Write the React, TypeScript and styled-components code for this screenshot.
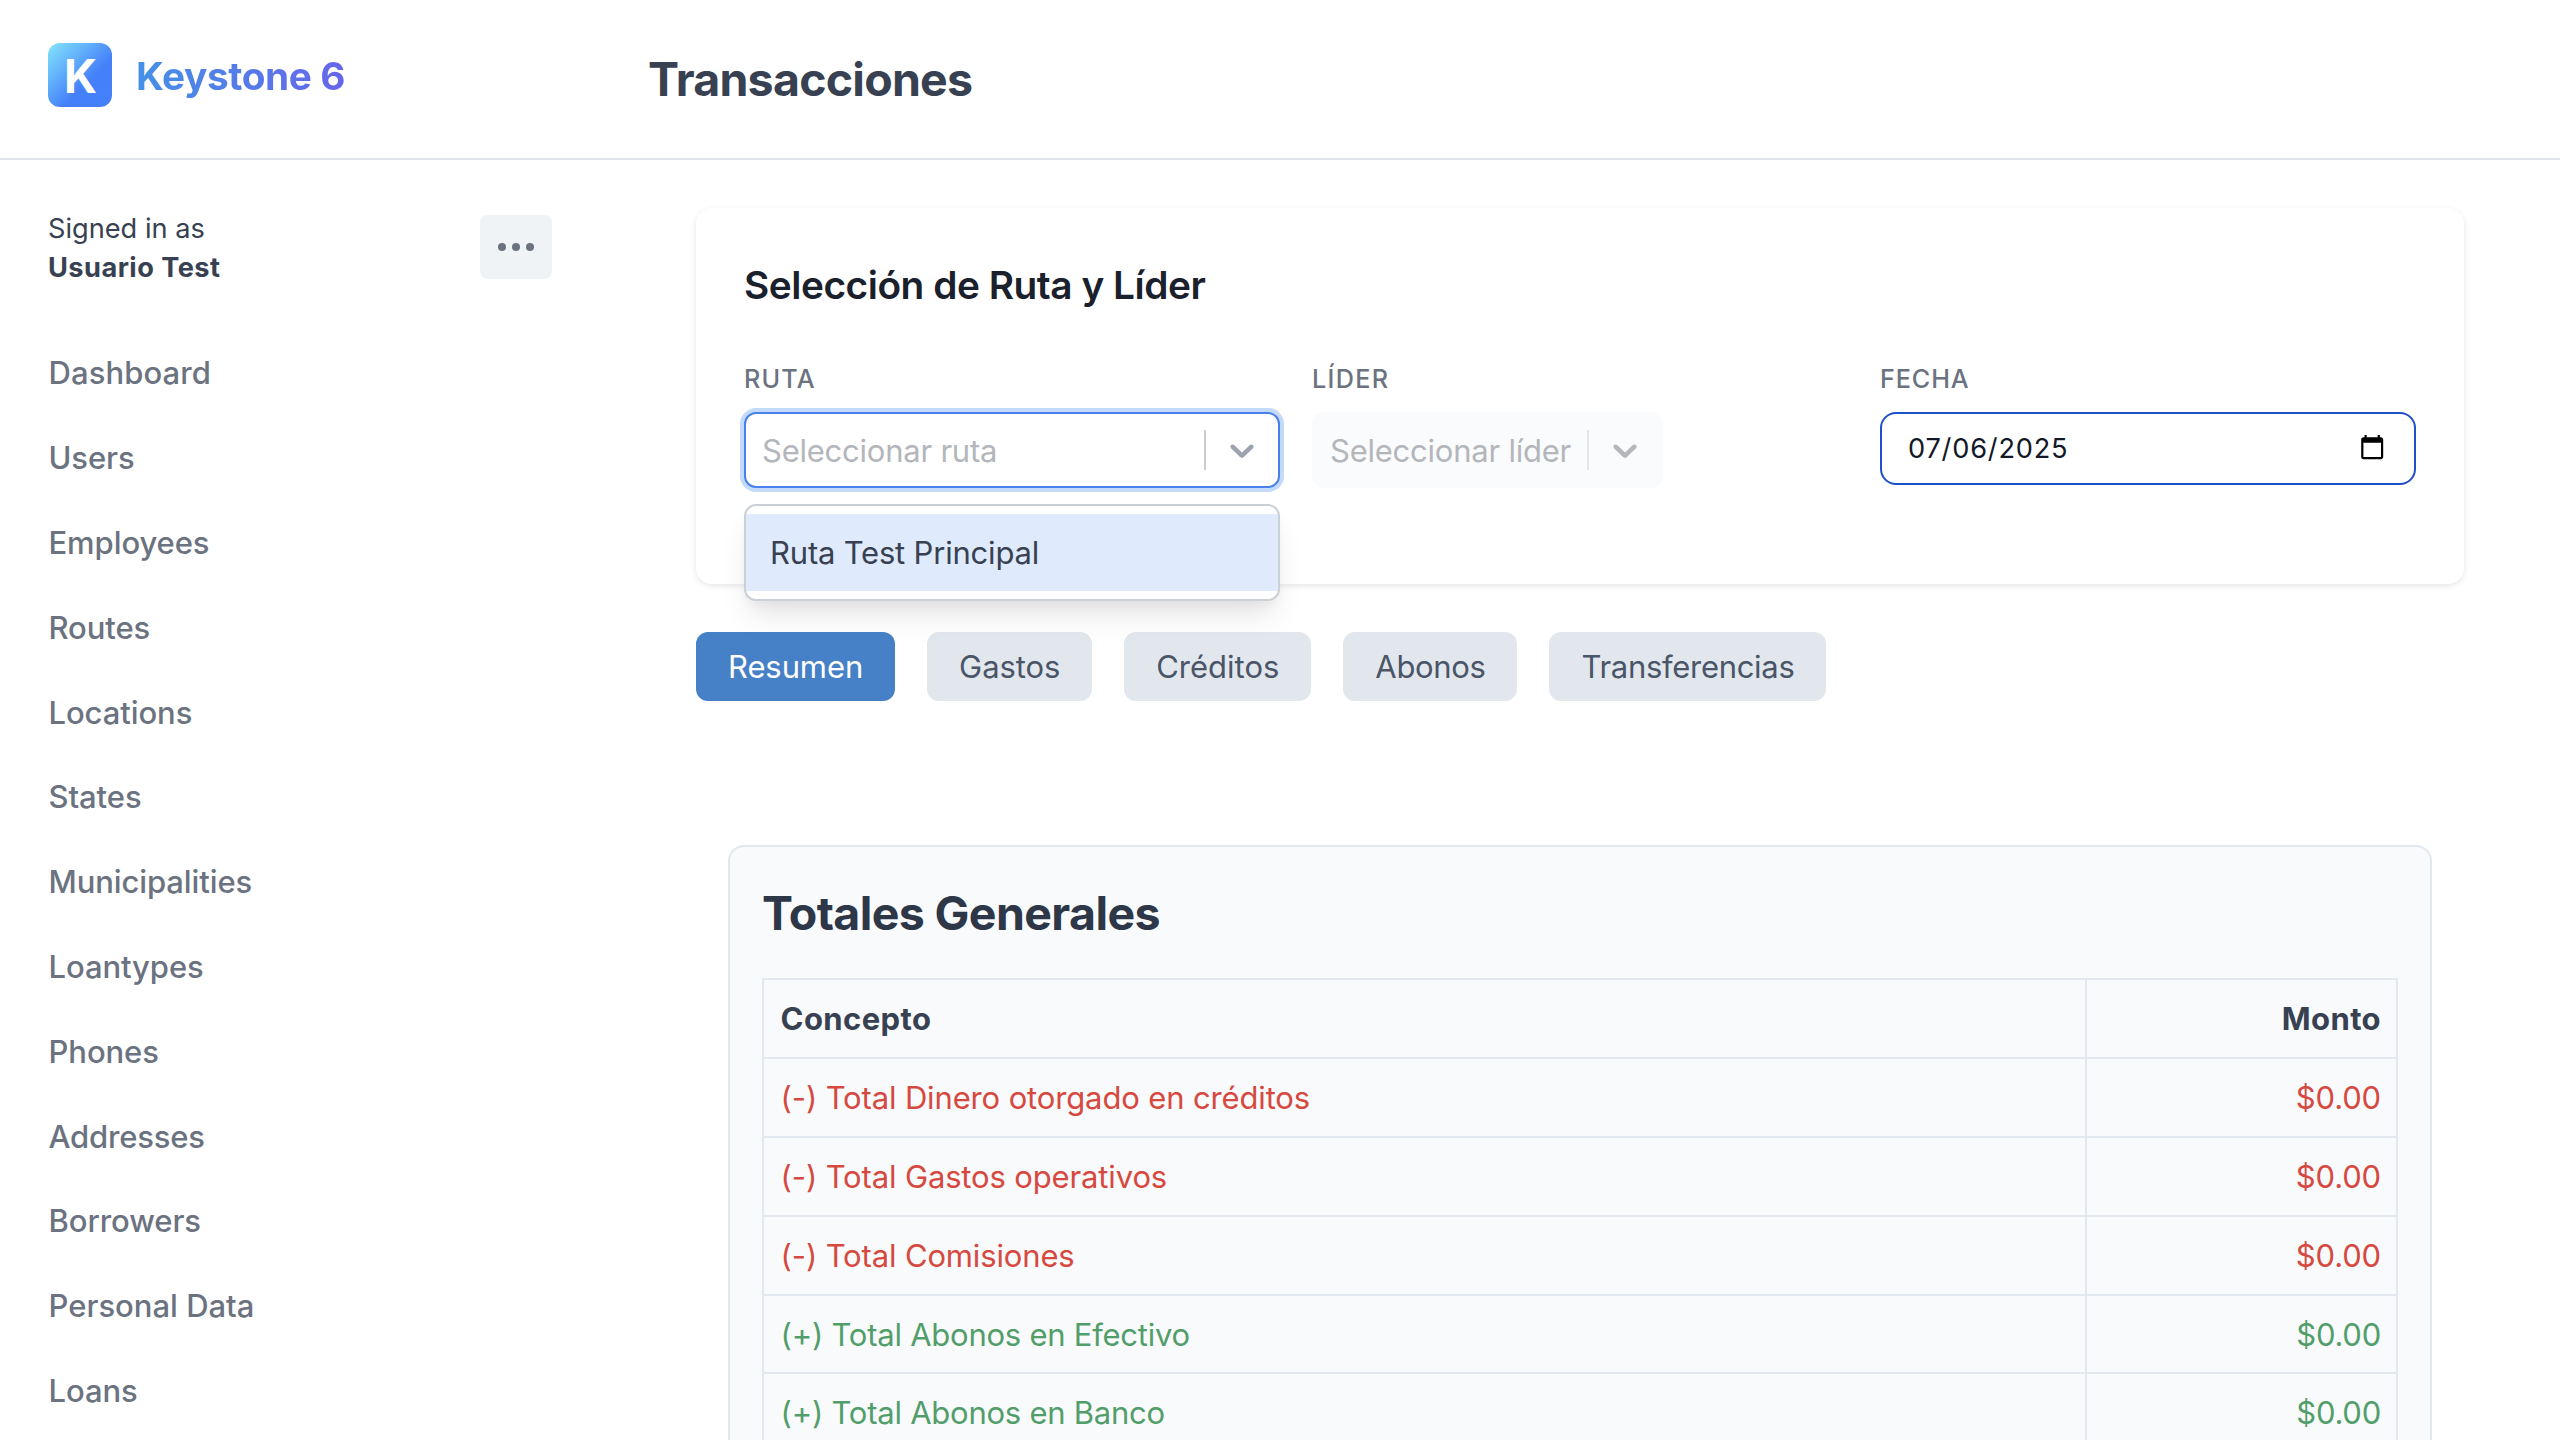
import React from "react";
import styled, { createGlobalStyle } from "styled-components";

const GlobalStyle = createGlobalStyle`
  *, *::before, *::after { box-sizing: border-box; }
  html, body { margin: 0; padding: 0; }
  body {
    background: #fff;
    color: #374151;
    font-family: Inter, "Liberation Sans", sans-serif;
    overflow: hidden;
  }
`;

const Page = styled.div`
  display: flex;
  flex-direction: column;
  width: 2560px;
  height: 1440px;
  overflow: hidden;
`;

const Header = styled.header`
  display: grid;
  grid-template-columns: 600px 1fr;
  align-items: center;
  flex: none;
  height: 160px;
  padding: 0 48px;
  border-bottom: 2px solid #e1e5e9;
`;

const Brand = styled.div`
  display: flex;
  align-items: center;
  gap: 24px;
  margin-bottom: 8px;
`;

const Logo = styled.div`
  display: grid;
  place-items: center;
  width: 64px;
  height: 64px;
  padding: 2px 0 0 1px;
  border-radius: 12px;
  background: linear-gradient(135deg, #84e6fb 0%, #4480f9 62%);
  color: #fff;
  font-size: 46px;
  font-weight: 700;
  line-height: 60px;
`;

const BrandName = styled.span`
  padding-top: 1px;
  background: linear-gradient(to right, #4491e6, #6666ea);
  background-clip: text;
  -webkit-background-clip: text;
  color: transparent;
  font-size: 38.8px;
  font-weight: 700;
  line-height: 64px;
  letter-spacing: -0.4px;
`;

const PageTitle = styled.h1`
  margin: 0;
  color: #374151;
  font-size: 46.5px;
  font-weight: 700;
  line-height: 60px;
  letter-spacing: -0.76px;
`;

const Body = styled.div`
  display: flex;
  flex: 1;
  min-height: 0;
`;

const Sidebar = styled.aside`
  display: flex;
  flex-direction: column;
  flex: none;
  width: 600px;
  padding: 48px 48px 0;
`;

const Session = styled.div`
  display: flex;
  align-items: center;
  justify-content: space-between;
  height: 78.4px;
`;

const SessionText = styled.div`
  padding-top: 2px;
  color: #374151;
  font-size: 27.2px;
  line-height: 39.2px;

  strong {
    display: block;
    font-weight: 700;
    letter-spacing: 0.45px;
  }
`;

const MoreButton = styled.button`
  display: flex;
  align-items: center;
  justify-content: center;
  gap: 6px;
  width: 72px;
  height: 64px;
  padding: 0;
  border: 0;
  border-radius: 8px;
  background: #eff3f6;
`;

const Dot = styled.span`
  width: 8px;
  height: 8px;
  border-radius: 50%;
  background: #6b7280;
`;

const Nav = styled.nav`
  display: flex;
  flex-direction: column;
  margin-top: 45px;
  padding-left: 0.5px;
`;

const NavItem = styled.a<{ $track?: number }>`
  flex: none;
  color: #6b7280;
  font-size: 31px;
  font-weight: 500;
  line-height: 84.8px;
  letter-spacing: ${(p) => p.$track ?? -0.08}px;
`;

const Main = styled.main`
  display: flex;
  flex-direction: column;
  flex: 1;
  padding: 48px 96px 0;
`;

const FilterCard = styled.section`
  flex: none;
  height: 376px;
  padding: 48px;
  border-radius: 16px;
  background: #fff;
  box-shadow: 0 2px 6px rgba(0, 0, 0, 0.1);
`;

const CardTitle = styled.h2`
  margin: 0 0 48px;
  color: #1a202c;
  font-size: 38.8px;
  font-weight: 600;
  line-height: 57px;
  letter-spacing: -0.46px;
`;

const Fields = styled.div`
  display: grid;
  grid-template-columns: repeat(3, 1fr);
  gap: 32px;
  align-items: start;
`;

const Field = styled.div`
  position: relative;
`;

const Label = styled.div<{ $track: number }>`
  margin-bottom: 15px;
  color: #6b7280;
  font-size: 25.2px;
  font-weight: 500;
  line-height: 36px;
  letter-spacing: ${(p) => p.$track}px;
`;

const Select = styled.div<{ $focused?: boolean; $disabled?: boolean }>`
  display: flex;
  align-items: center;
  width: ${(p) => (p.$disabled ? "351px" : "100%")};
  height: 76px;
  border: 2px solid ${(p) => (p.$focused ? "#4a80ee" : "#fafbfd")};
  border-radius: 12px;
  background: ${(p) => (p.$disabled ? "#fafbfd" : "#fff")};
  box-shadow: ${(p) => (p.$focused ? "0 0 0 4px #c3dafb" : "none")};
  color: ${(p) => (p.$disabled ? "#b4b6bb" : "#9ca3af")};
`;

const Placeholder = styled.span`
  flex: 1;
  padding: 1px 0 0 16px;
  color: #b3b6bb;
  font-size: 31px;
  line-height: 48px;
  letter-spacing: -0.23px;
  white-space: nowrap;
`;

const Separator = styled.span<{ $faint?: boolean }>`
  width: 2px;
  height: 40px;
  background: ${(p) => (p.$faint ? "#e4e6e9" : "#cccccc")};
`;

const Indicator = styled.span`
  display: flex;
  padding: 16px;

  svg {
    width: 40px;
    height: 40px;
    fill: currentColor;
  }
`;

const Menu = styled.div`
  position: absolute;
  top: 143px;
  left: 0;
  right: 0;
  z-index: 2;
  height: 97px;
  padding: 8px 0;
  border: 2px solid #cbd0d6;
  border-radius: 12px;
  background: #fff;
  box-shadow: 0 20px 30px -6px rgba(0, 0, 0, 0.1), 0 8px 12px -4px rgba(0, 0, 0, 0.05);
`;

const Option = styled.div`
  padding-left: 24px;
  background: #dfeafd;
  color: #374151;
  font-size: 31px;
  line-height: 77px;
  letter-spacing: -0.2px;
`;

const DateInput = styled.div`
  display: flex;
  align-items: center;
  justify-content: space-between;
  height: 73px;
  padding: 0 29px 0 26px;
  border: 2px solid #2050c8;
  border-radius: 16px;
  color: #111827;
  font-size: 27.2px;
  line-height: 40px;
  letter-spacing: 0.8px;

  svg {
    width: 26.4px;
    height: 26.4px;
    margin-bottom: 3px;
    fill: #000;
  }
`;

const Tabs = styled.div`
  display: flex;
  flex: none;
  gap: 32px;
  margin-top: 48px;
`;

const Tab = styled.button<{ $active?: boolean; $track: number }>`
  height: 68.8px;
  padding: 1px 32px 0;
  border: 0;
  border-radius: 12px;
  background: ${(p) => (p.$active ? "#4681c7" : "#e2e7ee")};
  color: ${(p) => (p.$active ? "#fff" : "#4a5568")};
  font-family: inherit;
  font-size: 31px;
  line-height: 67.8px;
  letter-spacing: ${(p) => p.$track}px;
`;

const TotalsPanel = styled.section`
  flex: none;
  height: 760px;
  margin: 144.2px 32px 0;
  padding: 32px;
  border: 2px solid #e2e8f0;
  border-radius: 16px;
  background: #f9fafc;
`;

const PanelTitle = styled.h2`
  margin: 0 0 31px;
  color: #2d3748;
  font-size: 46.5px;
  font-weight: 700;
  line-height: 68px;
  letter-spacing: -0.62px;
`;

const Table = styled.div`
  border: 2px solid #e2e8ee;
  border-bottom: 0;
`;

const Row = styled.div<{ $tone: "head" | "out" | "in"; $height?: number }>`
  display: grid;
  grid-template-columns: 1321px 1fr;
  height: ${(p) => p.$height ?? 79}px;
  border-bottom: 2px solid #e2e8ee;
  color: ${(p) => ({ head: "#374151", out: "#d6493f", in: "#529e6b" })[p.$tone]};
  font-size: 31px;
  font-weight: ${(p) => (p.$tone === "head" ? 700 : 400)};
  line-height: 77px;
  letter-spacing: ${(p) => ({ head: 0.4, out: -0.14, in: -0.24 })[p.$tone]}px;
`;

const Cell = styled.div<{ $numeric?: boolean }>`
  padding: 0 15px 0 16.6px;
  text-align: ${(p) => (p.$numeric ? "right" : "left")};
  border-left: ${(p) => (p.$numeric ? "2px solid #e2e8ee" : "0")};
`;

const ChevronDown = () => (
  <Indicator>
    <svg viewBox="0 0 20 20" aria-hidden="true">
      <path d="M4.516 7.548c0.436-0.446 1.043-0.481 1.576 0l3.908 3.747 3.908-3.747c0.533-0.481 1.141-0.446 1.574 0 0.436 0.445 0.408 1.197 0 1.615-0.406 0.418-4.695 4.502-4.695 4.502-0.217 0.223-0.502 0.335-0.787 0.335s-0.57-0.112-0.789-0.335c0 0-4.287-4.084-4.695-4.502s-0.436-1.17 0-1.615z" />
    </svg>
  </Indicator>
);

const CalendarIcon = () => (
  <svg viewBox="0 0 24 24" aria-hidden="true">
    <path d="M20 3h-1V1h-2v2H7V1H5v2H4c-1.1 0-2 .9-2 2v16c0 1.1.9 2 2 2h16c1.1 0 2-.9 2-2V5c0-1.1-.9-2-2-2zm0 18H4V8h16v13z" />
  </svg>
);

const navItems: { label: string; track?: number }[] = [
  { label: "Dashboard", track: 0.1 },
  { label: "Users" },
  { label: "Employees" },
  { label: "Routes" },
  { label: "Locations" },
  { label: "States" },
  { label: "Municipalities", track: -0.1 },
  { label: "Loantypes" },
  { label: "Phones" },
  { label: "Addresses", track: -0.2 },
  { label: "Borrowers" },
  { label: "Personal Data", track: 0 },
  { label: "Loans" },
];

const tabs: { label: string; track: number }[] = [
  { label: "Resumen", track: -0.1 },
  { label: "Gastos", track: -0.1 },
  { label: "Créditos", track: 0 },
  { label: "Abonos", track: -0.35 },
  { label: "Transferencias", track: -0.3 },
];

const totals: { label: string; tone: "out" | "in"; height?: number }[] = [
  { label: "(-) Total Dinero otorgado en créditos", tone: "out" },
  { label: "(-) Total Gastos operativos", tone: "out" },
  { label: "(-) Total Comisiones", tone: "out" },
  { label: "(+) Total Abonos en Efectivo", tone: "in", height: 78 },
  { label: "(+) Total Abonos en Banco", tone: "in" },
];

export default function App() {
  return (
    <>
      <GlobalStyle />
      <Page>
        <Header>
          <Brand>
            <Logo>K</Logo>
            <BrandName>Keystone 6</BrandName>
          </Brand>
          <PageTitle>Transacciones</PageTitle>
        </Header>
        <Body>
          <Sidebar>
            <Session>
              <SessionText>
                Signed in as
                <strong>Usuario Test</strong>
              </SessionText>
              <MoreButton aria-label="Links and signout">
                <Dot />
                <Dot />
                <Dot />
              </MoreButton>
            </Session>
            <Nav>
              {navItems.map((item) => (
                <NavItem key={item.label} $track={item.track}>
                  {item.label}
                </NavItem>
              ))}
            </Nav>
          </Sidebar>
          <Main>
            <FilterCard>
              <CardTitle>Selección de Ruta y Líder</CardTitle>
              <Fields>
                <Field>
                  <Label $track={1.15}>RUTA</Label>
                  <Select $focused>
                    <Placeholder>Seleccionar ruta</Placeholder>
                    <Separator />
                    <ChevronDown />
                  </Select>
                  <Menu>
                    <Option>Ruta Test Principal</Option>
                  </Menu>
                </Field>
                <Field>
                  <Label $track={1.3}>LÍDER</Label>
                  <Select $disabled>
                    <Placeholder>Seleccionar líder</Placeholder>
                    <Separator $faint />
                    <ChevronDown />
                  </Select>
                </Field>
                <Field>
                  <Label $track={0.9}>FECHA</Label>
                  <DateInput>
                    <span>07/06/2025</span>
                    <CalendarIcon />
                  </DateInput>
                </Field>
              </Fields>
            </FilterCard>
            <Tabs>
              {tabs.map((tab, i) => (
                <Tab key={tab.label} $active={i === 0} $track={tab.track}>
                  {tab.label}
                </Tab>
              ))}
            </Tabs>
            <TotalsPanel>
              <PanelTitle>Totales Generales</PanelTitle>
              <Table>
                <Row $tone="head">
                  <Cell>Concepto</Cell>
                  <Cell $numeric>Monto</Cell>
                </Row>
                {totals.map((row) => (
                  <Row key={row.label} $tone={row.tone} $height={row.height}>
                    <Cell>{row.label}</Cell>
                    <Cell $numeric>$0.00</Cell>
                  </Row>
                ))}
              </Table>
            </TotalsPanel>
          </Main>
        </Body>
      </Page>
    </>
  );
}
